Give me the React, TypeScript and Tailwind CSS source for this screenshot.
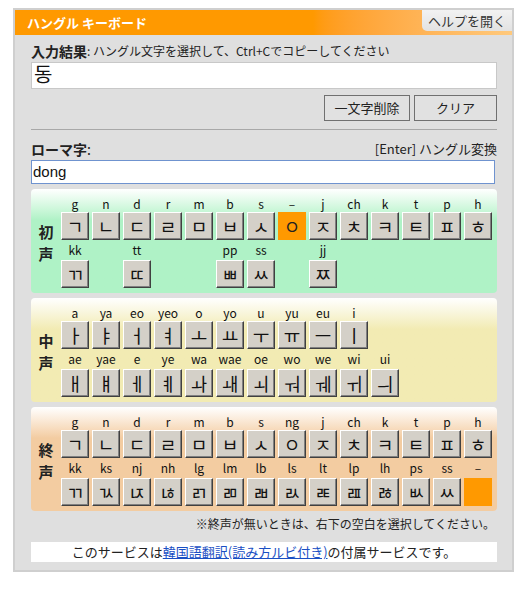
import type { FC } from 'react';

type Key = { label: string; jamo: string; on?: boolean } | null;

const FONT = "font-['Noto_Sans_CJK_JP','Noto_Sans_CJK_KR',sans-serif]";

const choTop: Key[] = [
  { label: 'g', jamo: 'ㄱ' },
  { label: 'n', jamo: 'ㄴ' },
  { label: 'd', jamo: 'ㄷ' },
  { label: 'r', jamo: 'ㄹ' },
  { label: 'm', jamo: 'ㅁ' },
  { label: 'b', jamo: 'ㅂ' },
  { label: 's', jamo: 'ㅅ' },
  { label: '–', jamo: 'ㅇ', on: true },
  { label: 'j', jamo: 'ㅈ' },
  { label: 'ch', jamo: 'ㅊ' },
  { label: 'k', jamo: 'ㅋ' },
  { label: 't', jamo: 'ㅌ' },
  { label: 'p', jamo: 'ㅍ' },
  { label: 'h', jamo: 'ㅎ' },
];

const choBottom: Key[] = [
  { label: 'kk', jamo: 'ㄲ' },
  null,
  { label: 'tt', jamo: 'ㄸ' },
  null,
  null,
  { label: 'pp', jamo: 'ㅃ' },
  { label: 'ss', jamo: 'ㅆ' },
  null,
  { label: 'jj', jamo: 'ㅉ' },
];

const jungTop: Key[] = [
  { label: 'a', jamo: 'ㅏ' },
  { label: 'ya', jamo: 'ㅑ' },
  { label: 'eo', jamo: 'ㅓ' },
  { label: 'yeo', jamo: 'ㅕ' },
  { label: 'o', jamo: 'ㅗ' },
  { label: 'yo', jamo: 'ㅛ' },
  { label: 'u', jamo: 'ㅜ' },
  { label: 'yu', jamo: 'ㅠ' },
  { label: 'eu', jamo: 'ㅡ' },
  { label: 'i', jamo: 'ㅣ' },
];

const jungBottom: Key[] = [
  { label: 'ae', jamo: 'ㅐ' },
  { label: 'yae', jamo: 'ㅒ' },
  { label: 'e', jamo: 'ㅔ' },
  { label: 'ye', jamo: 'ㅖ' },
  { label: 'wa', jamo: 'ㅘ' },
  { label: 'wae', jamo: 'ㅙ' },
  { label: 'oe', jamo: 'ㅚ' },
  { label: 'wo', jamo: 'ㅝ' },
  { label: 'we', jamo: 'ㅞ' },
  { label: 'wi', jamo: 'ㅟ' },
  { label: 'ui', jamo: 'ㅢ' },
];

const jongTop: Key[] = choTop.map((k) =>
  k && k.jamo === 'ㅇ' ? { label: 'ng', jamo: 'ㅇ' } : k
);

const jongBottom: Key[] = [
  { label: 'kk', jamo: 'ㄲ' },
  { label: 'ks', jamo: 'ㄳ' },
  { label: 'nj', jamo: 'ㄵ' },
  { label: 'nh', jamo: 'ㄶ' },
  { label: 'lg', jamo: 'ㄺ' },
  { label: 'lm', jamo: 'ㄻ' },
  { label: 'lb', jamo: 'ㄼ' },
  { label: 'ls', jamo: 'ㄽ' },
  { label: 'lt', jamo: 'ㄾ' },
  { label: 'lp', jamo: 'ㄿ' },
  { label: 'lh', jamo: 'ㅀ' },
  { label: 'ps', jamo: 'ㅄ' },
  { label: 'ss', jamo: 'ㅆ' },
  { label: '–', jamo: '', on: true },
];

const KeyRow: FC<{ keys: Key[]; top?: boolean }> = ({ keys, top }) => (
  <div>
    <div className={`flex gap-[3px] ${top ? 'h-[16px]' : 'h-[20px] items-center'}`}>
      {keys.map((k, i) => (
        <div
          key={i}
          className="w-[28px] text-center text-[12px] leading-[16px] text-[#111]"
        >
          {k?.label}
        </div>
      ))}
    </div>
    <div className="flex gap-[3px] h-[28px]">
      {keys.map((k, i) =>
        !k ? (
          <div key={i} className="w-[28px]" />
        ) : k.on ? (
          <div
            key={i}
            className="w-[28px] h-[28px] bg-[#ff9900] flex items-center justify-center text-[18px] text-[#222] font-['Noto_Sans_CJK_KR',sans-serif]"
          >
            {k.jamo}
          </div>
        ) : (
          <div
            key={i}
            className="w-[28px] h-[28px] bg-[#d4d0c8] border border-t-white border-l-white border-r-[#404040] border-b-[#404040] shadow-[inset_-1px_-1px_#808080] flex items-center justify-center text-[18px] text-[#111] font-['Noto_Sans_CJK_KR',sans-serif]"
          >
            {k.jamo}
          </div>
        )
      )}
    </div>
  </div>
);

const Panel: FC<{ title: [string, string]; bg: string; top: Key[]; bottom: Key[] }> = ({
  title,
  bg,
  top,
  bottom,
}) => (
  <div className={`flex rounded-[4px] pt-[7px] pb-[5px] ${bg}`}>
    <div className="w-[30px] flex flex-col items-center justify-center text-[15px] font-bold leading-[22px] text-[#222] pt-[2px]">
      <span>{title[0]}</span>
      <span>{title[1]}</span>
    </div>
    <div className="flex flex-col">
      <KeyRow keys={top} top />
      <KeyRow keys={bottom} />
    </div>
  </div>
);

export default function App() {
  return (
    <div className={`${FONT} pt-[8px] pl-[13px]`}>
      <div className="w-[501px] border-2 border-[#cfcfcf] bg-[#dfdfdf]">
        <div className="h-[25px] flex items-start justify-between bg-linear-to-r from-[#ff9900] from-60% to-[#ffc97c]">
          <div className="pl-[12px] h-[25px] flex items-center text-[13px] font-bold text-white">
            ハングル キーボード
          </div>
          <div className="h-[21px] px-[6px] flex items-center rounded-bl-[5px] bg-linear-to-b from-[#f2f2f2] to-[#e2e2e2] text-[13px] text-[#333]">
            ヘルプを開く
          </div>
        </div>

        <div className="pl-[16px] pr-[15px] pt-[6px] pb-[8px]">
          <div className="h-[20px] flex items-center text-[#222]">
            <span className="text-[14px] font-bold">入力結果</span>
            <span className="text-[12px]">: ハングル文字を選択して、Ctrl+Cでコピーしてください</span>
          </div>
          <div className="mt-[1px] h-[27px] bg-white border border-[#c8c8c8] pl-[2px] text-[20px] leading-[22px] text-[#111] font-['Noto_Sans_CJK_KR',sans-serif]">
            동
          </div>
          <div className="mt-[6px] flex justify-end gap-[4px]">
            <button className="w-[86px] h-[26px] border border-[#707070] bg-[#e1e1e1] text-[13px] text-[#222]">
              一文字削除
            </button>
            <button className="w-[83px] h-[26px] border border-[#707070] bg-[#e1e1e1] text-[13px] text-[#222]">
              クリア
            </button>
          </div>
          <div className="mt-[8px] h-px bg-[#a8a8a8]" />

          <div className="mt-[9px] h-[20px] flex items-center justify-between text-[#222]">
            <span className="text-[14px] font-bold">
              ローマ字<span className="font-normal">:</span>
            </span>
            <span className="text-[13px]">[Enter] ハングル変換</span>
          </div>
          <div className="mt-[1px] w-[464px] h-[24px] bg-white border border-[#6f93cf] pl-[1px] text-[15px] leading-[22px] text-[#111] font-['Liberation_Sans',sans-serif]">
            dong
          </div>

          <div className="mt-[5px] flex flex-col gap-[5px]">
            <Panel
              title={['初', '声']}
              bg="bg-linear-to-b from-white to-[#aff2c6] to-30%"
              top={choTop}
              bottom={choBottom}
            />
            <Panel
              title={['中', '声']}
              bg="bg-linear-to-b from-white to-[#f2ebb3] to-30%"
              top={jungTop}
              bottom={jungBottom}
            />
            <Panel
              title={['終', '声']}
              bg="bg-linear-to-b from-white to-[#f3cca1] to-30%"
              top={jongTop}
              bottom={jongBottom}
            />
          </div>

          <div className="mt-[2px] h-[22px] flex items-center justify-end pr-[2px] text-[12px] text-[#222]">
            ※終声が無いときは、右下の空白を選択してください。
          </div>
          <div className="mt-[7px] h-[20px] bg-white flex items-center justify-center text-[13px] text-[#222]">
            このサービスは
            <a href="#" className="text-[#1a4fc4] underline">
              韓国語翻訳(読み方ルビ付き)
            </a>
            の付属サービスです。
          </div>
        </div>
      </div>
    </div>
  );
}
